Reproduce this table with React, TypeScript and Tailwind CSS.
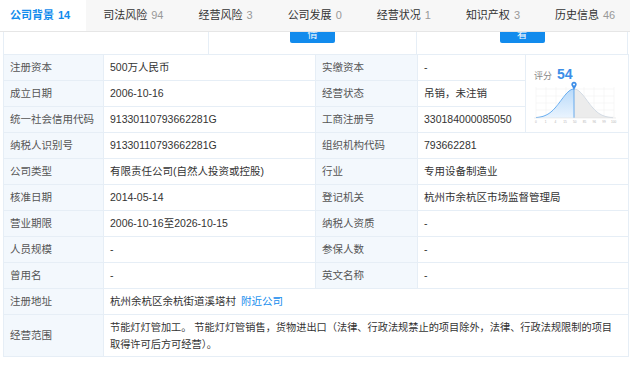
import React from "react";

const TABS: { name: string; count: string; active?: boolean }[] = [
  { name: "公司背景", count: "14", active: true },
  { name: "司法风险", count: "94" },
  { name: "经营风险", count: "3" },
  { name: "公司发展", count: "0" },
  { name: "经营状况", count: "1" },
  { name: "知识产权", count: "3" },
  { name: "历史信息", count: "46" },
];

const ROWS: [string, string, string, string][] = [
  ["注册资本", "500万人民币", "实缴资本", "-"],
  ["成立日期", "2006-10-16", "经营状态", "吊销，未注销"],
  ["统一社会信用代码", "91330110793662281G", "工商注册号", "330184000085050"],
  ["纳税人识别号", "91330110793662281G", "组织机构代码", "793662281"],
  ["公司类型", "有限责任公司(自然人投资或控股)", "行业", "专用设备制造业"],
  ["核准日期", "2014-05-14", "登记机关", "杭州市余杭区市场监督管理局"],
  ["营业期限", "2006-10-16至2026-10-15", "纳税人资质", "-"],
  ["人员规模", "-", "参保人数", "-"],
  ["曾用名", "-", "英文名称", "-"],
];

const label = "bg-[#f3f8fd] border border-[#e6eef6] pl-[6px] text-[#555] h-[26px]";
const value = "border border-[#e6eef6] pl-[6px] text-[#333] h-[26px]";

// bell curve points
function curve(from: number, to: number) {
  const pts: string[] = [];
  for (let x = from; x <= to; x += 1) {
    const y = 63 - 29 * Math.exp(-((x - 48) ** 2) / (2 * 13 * 13));
    pts.push(`${x},${y.toFixed(2)}`);
  }
  return pts;
}

function ScoreChart() {
  const left = curve(10, 48);
  const right = curve(48, 87);
  return (
    <div className="relative h-full w-full">
      <div className="absolute left-[8px] top-[9px] flex items-baseline gap-[5px]">
        <span className="text-[9px] text-[#888]">评分</span>
        <span className="text-[14px] font-bold text-[#3d8ee8]">54</span>
      </div>
      <svg width="103" height="80" viewBox="0 0 103 80" className="absolute left-0 top-0">
        <defs>
          <linearGradient id="lg" x1="0" y1="0" x2="0" y2="1">
            <stop offset="0" stopColor="#b9dafa" />
            <stop offset="1" stopColor="#eaf4fe" />
          </linearGradient>
        </defs>
        {[34, 41, 48, 55, 62].map((y) => (
          <line key={y} x1="10" x2="88" y1={y} y2={y} stroke="#f2f2f2" strokeWidth="0.6" />
        ))}
        {[10, 20, 30, 40, 58, 68, 78, 88].map((x) => (
          <line key={x} x1={x} x2={x} y1="32" y2="63" stroke="#f2f2f2" strokeWidth="0.6" />
        ))}
        <polygon points={`10,63 ${left.join(" ")} 48,63`} fill="url(#lg)" />
        <polygon points={`48,63 ${right.join(" ")} 87,63`} fill="#ececec" />
        <polyline points={left.join(" ")} fill="none" stroke="#5aa6ee" strokeWidth="0.9" />
        <polyline points={right.join(" ")} fill="none" stroke="#cfd8e2" strokeWidth="0.9" />
        <line x1="48" x2="48" y1="34" y2="63" stroke="#4a9aea" strokeWidth="0.8" />
        <line x1="8" x2="90" y1="63" y2="63" stroke="#e3e3e3" strokeWidth="0.6" />
        <path d="M48 35 L45.6 30.6 A2.7 2.7 0 1 1 50.4 30.6 Z" fill="#3d8ee8" />
        <circle cx="48" cy="29.4" r="1" fill="#fff" />
        {["0", "1", "4", "15", "50", "85", "96", "99", "100"].map((t, i) => (
          <text key={i} x={10 + i * 9.7} y="67.5" fontSize="3.2" fill="#b5b5b5" textAnchor="middle">
            {t}
          </text>
        ))}
      </svg>
    </div>
  );
}

export default function App() {
  return (
    <div className="relative h-[368px] w-[630px] overflow-hidden bg-white font-['Liberation_Sans','Noto_Sans_CJK_SC',sans-serif]">
      {/* tabs */}
      <div className="flex h-[32px] items-stretch overflow-hidden border-b border-[#e6e6e6] bg-[#f7f7f7] text-[11px]">
        {TABS.map((t, i) => (
          <div
            key={t.name}
            className={
              t.active
                ? "flex shrink-0 items-center whitespace-nowrap bg-white pl-[10px] pr-[16px] text-[#128bed]"
                : i === 1
                  ? "flex shrink-0 items-center whitespace-nowrap px-[17px] text-[#333]"
                  : "flex shrink-0 items-center whitespace-nowrap pl-[18px] pr-[17px] text-[#333]"
            }
          >
            <span className={t.active ? "font-bold" : ""}>{t.name}</span>
            <span className={t.active ? "ml-[4px] font-bold" : "ml-[4px] text-[#999]"}>{t.count}</span>
          </div>
        ))}
      </div>

      {/* scrolled strip with buttons */}
      <div className="ml-[3px] flex h-[22px] w-[625px]">
        <div className="w-[206px] border-x border-[#e6eef6]" />
        <div className="flex w-[208px] justify-center border-r border-[#e6eef6]">
          <div className="flex h-[11px] w-[45px] items-end justify-center overflow-hidden rounded-b-[2px] bg-[#128bed] text-[10px] leading-[16px] text-white">
            情
          </div>
        </div>
        <div className="flex w-[211px] justify-center border-r border-[#e6eef6]">
          <div className="flex h-[11px] w-[45px] items-end justify-center overflow-hidden rounded-b-[2px] bg-[#128bed] text-[10px] leading-[16px] text-white">
            看
          </div>
        </div>
      </div>

      {/* info table */}
      <table className="ml-[3px] w-[625px] table-fixed border-collapse text-[10.5px]">
        <colgroup>
          <col className="w-[100px]" />
          <col className="w-[212px]" />
          <col className="w-[102px]" />
          <col className="w-[108px]" />
          <col className="w-[103px]" />
        </colgroup>
        <tbody>
          {ROWS.map((r, i) => (
            <tr key={r[0]}>
              <td className={label}>{r[0]}</td>
              <td className={value}>{r[1]}</td>
              <td className={label}>{r[2]}</td>
              <td className={value} colSpan={i < 3 ? 1 : 2}>
                {r[3]}
              </td>
              {i === 0 ? (
                <td rowSpan={3} className="border border-[#e6eef6] p-0 align-top">
                  <ScoreChart />
                </td>
              ) : null}
            </tr>
          ))}
          <tr>
            <td className={label}>注册地址</td>
            <td className={value} colSpan={4}>
              杭州余杭区余杭街道溪塔村 <span className="ml-[2px] text-[#128bed]">附近公司</span>
            </td>
          </tr>
          <tr>
            <td className={label + " h-[42px]"}>经营范围</td>
            <td className={value + " h-[42px] py-[3px] text-[10.2px] leading-[17px]"} colSpan={4}>
              节能灯灯管加工。 节能灯灯管销售，货物进出口（法律、行政法规禁止的项目除外，法律、行政法规限制的项目
              <br />
              取得许可后方可经营）。
            </td>
          </tr>
        </tbody>
      </table>
    </div>
  );
}
